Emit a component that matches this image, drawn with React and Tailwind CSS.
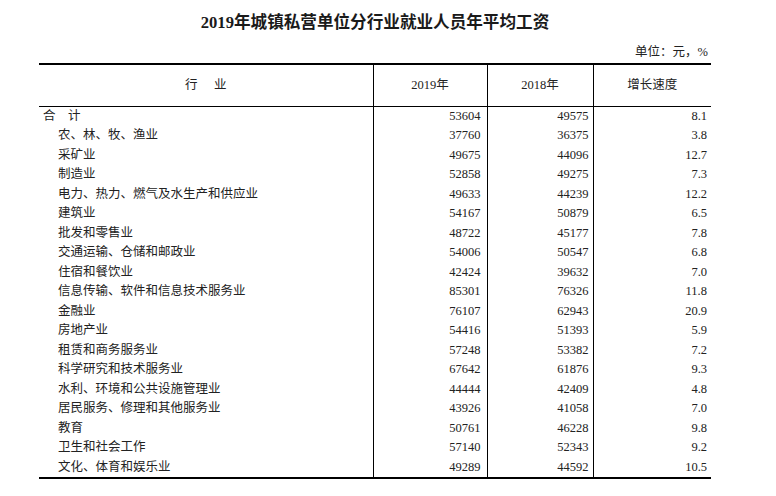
import React from "react";

const rows = [
  ["合　计", "53604", "49575", "8.1", false],
  ["农、林、牧、渔业", "37760", "36375", "3.8", true],
  ["采矿业", "49675", "44096", "12.7", true],
  ["制造业", "52858", "49275", "7.3", true],
  ["电力、热力、燃气及水生产和供应业", "49633", "44239", "12.2", true],
  ["建筑业", "54167", "50879", "6.5", true],
  ["批发和零售业", "48722", "45177", "7.8", true],
  ["交通运输、仓储和邮政业", "54006", "50547", "6.8", true],
  ["住宿和餐饮业", "42424", "39632", "7.0", true],
  ["信息传输、软件和信息技术服务业", "85301", "76326", "11.8", true],
  ["金融业", "76107", "62943", "20.9", true],
  ["房地产业", "54416", "51393", "5.9", true],
  ["租赁和商务服务业", "57248", "53382", "7.2", true],
  ["科学研究和技术服务业", "67642", "61876", "9.3", true],
  ["水利、环境和公共设施管理业", "44444", "42409", "4.8", true],
  ["居民服务、修理和其他服务业", "43926", "41058", "7.0", true],
  ["教育", "50761", "46228", "9.8", true],
  ["卫生和社会工作", "57140", "52343", "9.2", true],
  ["文化、体育和娱乐业", "49289", "44592", "10.5", true],
];

export default function App() {
  return (
    <div
      className="w-[776px] h-[496px] bg-white text-[#222]"
      style={{ fontFamily: '"Liberation Serif", "Noto Sans CJK SC", serif' }}
    >
      <div className="ml-[39px] w-[672px]">
        <div className="pt-[13px] h-[33px] text-center text-[16.6px] leading-[20px] font-bold text-[#1a1a1a]">
          2019年城镇私营单位分行业就业人员年平均工资
        </div>
        <div className="mt-[11px] h-[16px] leading-[16px] text-[12.5px] text-right pr-[3px]">
          单位：元，%
        </div>
        <table className="mt-[3px] table-fixed border-collapse w-[672px] text-[12.5px] border-t-2 border-b-2 border-black">
          <colgroup>
            <col className="w-[334px]" />
            <col className="w-[114px]" />
            <col className="w-[106px]" />
            <col className="w-[118px]" />
          </colgroup>
          <thead>
            <tr className="h-[42px] border-b border-black">
              <th className="font-normal text-center p-0 pl-[2px] tracking-[2px]">行　业</th>
              <th className="font-normal text-center p-0 border-l border-black">2019年</th>
              <th className="font-normal text-center p-0 border-l border-black">2018年</th>
              <th className="font-normal text-center p-0 border-l border-black">增长速度</th>
            </tr>
          </thead>
          <tbody>
            {rows.map(([name, a, b, c, sub], i) => (
              <tr key={i} className="h-[19.5px] leading-[19.5px]">
                <td className={sub ? "p-0 pl-[19px] whitespace-nowrap" : "p-0 pl-[4px] whitespace-nowrap"}>
                  {name}
                </td>
                <td className="p-0 pr-[6px] text-right border-l border-black">{a}</td>
                <td className="p-0 pr-[4px] text-right border-l border-black">{b}</td>
                <td className="p-0 pr-[4px] text-right border-l border-black">{c}</td>
              </tr>
            ))}
          </tbody>
        </table>
      </div>
    </div>
  );
}
